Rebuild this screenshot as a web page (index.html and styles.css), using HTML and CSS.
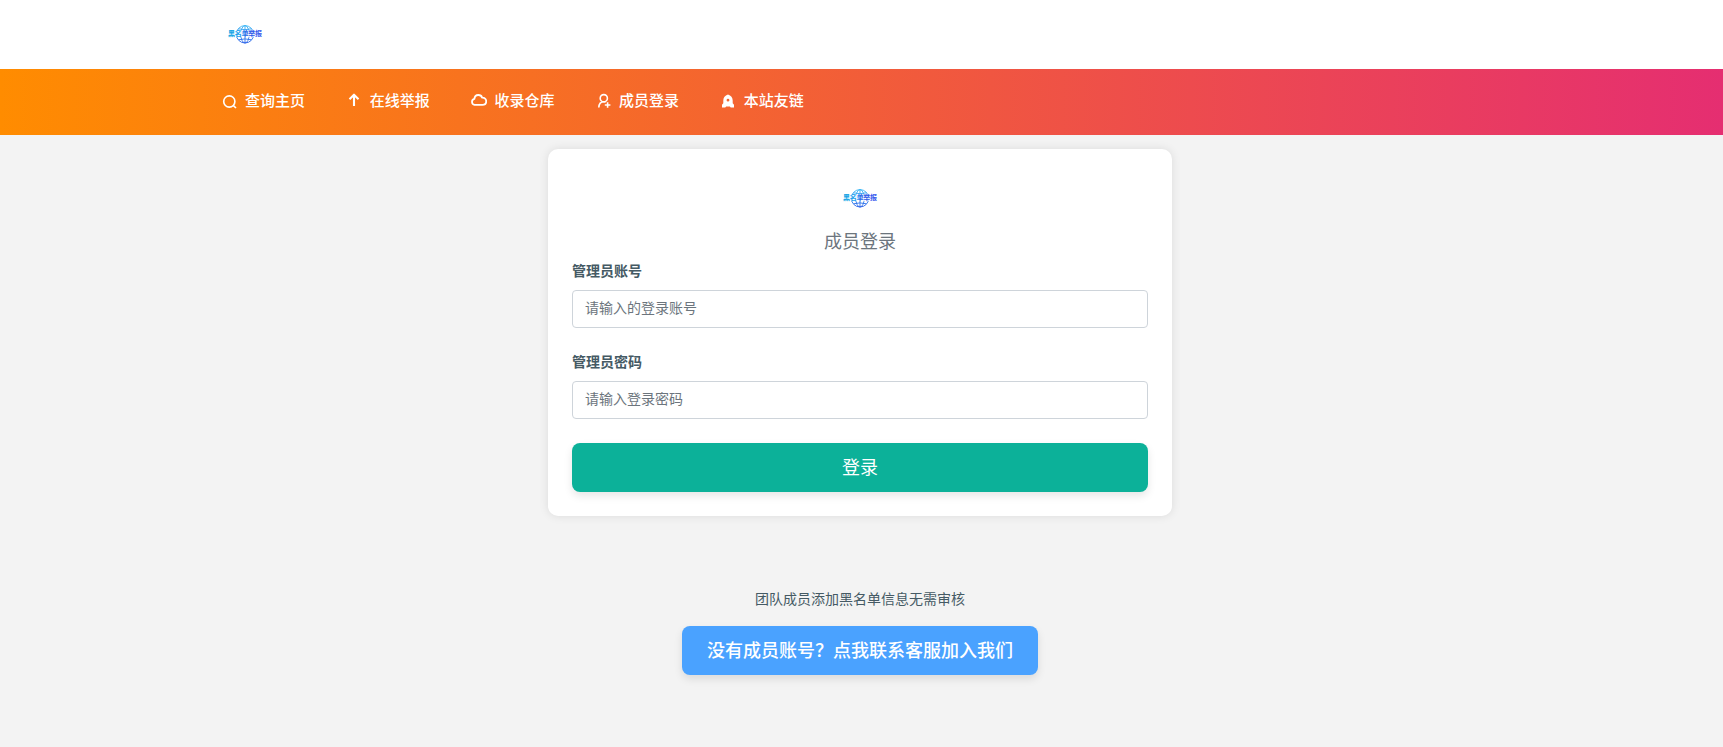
FILE: index.html
```html
<!DOCTYPE html>
<html lang="zh-CN">
<head>
<meta charset="utf-8">
<title>成员登录</title>
<link rel="stylesheet" href="styles.css">
</head>
<body>
<svg class="defs" aria-hidden="true">
  <defs>
    <linearGradient id="brand" gradientUnits="userSpaceOnUse" x1="0" y1="0" x2="36" y2="0">
      <stop offset="0" stop-color="#18a8e0"/><stop offset=".4" stop-color="#209af0"/><stop offset=".55" stop-color="#2456e4"/><stop offset="1" stop-color="#3d5cf0"/>
    </linearGradient>
    <linearGradient id="globe" x1="0" y1="0" x2="0" y2="1">
      <stop offset="0" stop-color="#35b5f5"/><stop offset="1" stop-color="#2860e8"/>
    </linearGradient>
    <symbol id="logo" viewBox="0 0 36 20">
      <g fill="none" stroke="url(#globe)" stroke-width=".9">
        <circle cx="18" cy="10.300" r="8.700"/>
        <ellipse cx="18" cy="10.300" rx="4.200" ry="8.700"/>
        <path d="M18 1.600v17.400M11.500 4.800q6.500 1.800 13 0M11.500 15.800q6.500-1.800 13 0"/>
      </g>
      <path d="M9 6.400h18v6.600H9z" fill="#fff" fill-opacity=".75"/>
      <text x="1" y="12.300" textLength="34" class="logo-text" fill="url(#brand)">黑名单举报</text>
    </symbol>
  </defs>
</svg>
<header class="header">
  <div class="container"><svg class="logo"><use href="#logo"/></svg></div>
</header>
<nav class="nav">
  <div class="container menu">
    <a class="item"><svg class="icon" viewBox="0 0 16 16"><circle cx="7.300" cy="8.500" r="5.600"/><path d="M11.200 12.400l2.800 2.600"/></svg><span>查询主页</span></a>
    <a class="item"><svg class="icon arrow" viewBox="0 0 16 16"><path d="M8 13V2.200M3.500 6.200L8 1.700l4.500 4.500"/></svg><span>在线举报</span></a>
    <a class="item"><svg class="icon cloud" viewBox="0 0 16 16"><path d="M3.600 11.800a3 3 0 0 1-.2-5.900C3.600 3.300 5.200 2 7.300 2c1.900 0 3.300 1 3.900 2.700 2.300-.1 4 1.300 4 3.500s-1.500 3.600-3.600 3.600z"/></svg><span>收录仓库</span></a>
    <a class="item"><svg class="icon" viewBox="0 0 16 16"><circle cx="7.800" cy="5.200" r="3.600"/><path d="M2.800 14.500c.2-3.400 2-5.700 5-5.700.8 0 1.300.1 1.800.3M11.600 9.200v5.600M8.800 12h5.600"/></svg><span>成员登录</span></a>
    <a class="item"><svg class="icon solid" viewBox="0 0 16 16"><path fill-rule="evenodd" d="M8 1.500c3 1 4.700 3 4.700 6v2.800l1.300 1.500v2.700h-3.300l-.8-1.100H6.100l-.8 1.100H2v-2.700l1.300-1.500V7.500c0-3 1.700-5 4.700-6zM8 5.800a1.400 1.400 0 1 0 0 2.800 1.400 1.400 0 0 0 0-2.800z"/></svg><span>本站友链</span></a>
  </div>
</nav>
<main class="main">
  <form class="card">
    <svg class="logo"><use href="#logo"/></svg>
    <h1 class="title">成员登录</h1>
    <label class="label" for="account">管理员账号</label>
    <input class="input" id="account" type="text" placeholder="请输入的登录账号">
    <label class="label" for="password">管理员密码</label>
    <input class="input" id="password" type="password" placeholder="请输入登录密码">
    <button class="button login" type="button">登录</button>
  </form>
  <p class="note">团队成员添加黑名单信息无需审核</p>
  <a class="button join">没有成员账号？点我联系客服加入我们</a>
</main>
</body>
</html>
```
FILE: styles.css
```css
* { box-sizing: border-box; }
body {
  margin: 0;
  min-height: 747px;
  background: #f3f3f3;
  color: #455a64;
  font: 14px/21px "Noto Sans CJK SC", sans-serif;
}
.defs { position: absolute; width: 0; height: 0; }
.container { width: 1320px; margin: 0 auto; padding-left: 20px; }
.header { height: 69px; background: #fff; }
.header .container { display: flex; align-items: center; height: 68px; padding-left: 25px; }
.logo { display: block; width: 36px; height: 20px; }
.logo-text { font: 700 7px "Noto Sans CJK SC", sans-serif; }
.nav { height: 66px; background: linear-gradient(90deg, #ff8c00, #e52e71); }
.menu { display: flex; align-items: center; height: 63px; }
.item {
  display: flex;
  align-items: center;
  gap: 7.5px;
  width: 124.7px;
  color: #fff;
  font-size: 15px;
  font-weight: 500;
  white-space: nowrap;
}
.item span { padding-bottom: 2px; }
.icon { flex: none; width: 16px; height: 16px; fill: none; stroke: #fff; stroke-width: 1.6; stroke-linejoin: round; }
.arrow { stroke-width: 2.1; }
.cloud { stroke-width: 1.8; }
.solid { fill: #fff; stroke: none; }
.main { display: flex; flex-direction: column; align-items: center; padding: 14px 3px 0 0; }
.card {
  display: flex;
  flex-direction: column;
  width: 624px;
  height: 367px;
  padding: 39px 24px 24px;
  border-radius: 10px;
  background: #fff;
  box-shadow: 0 0 10px rgba(0, 0, 0, .1);
}
.card .logo { align-self: center; }
.title { margin: 19px 0 7px; color: #6c757d; font-size: 18px; font-weight: 400; line-height: 26px; text-align: center; }
.label { margin-bottom: 9px; font-weight: 700; }
.input {
  width: 100%;
  height: 38px;
  margin: 0 0 23px;
  padding: 0 12px 4px;
  border: 1px solid #ced4da;
  border-radius: 4px;
  outline: 0;
  background: #fff;
  color: inherit;
  font: inherit;
}
.input::placeholder { color: #6c757d; opacity: 1; }
.button {
  height: 49px;
  padding: 0;
  border: 0;
  border-radius: 8px;
  color: #fff;
  font: 500 18px/46px "Noto Sans CJK SC", sans-serif;
  text-align: center;
  box-shadow: 0 4px 8px rgba(0, 0, 0, .1);
}
.login { margin-top: 1px; padding-bottom: 4px; font-weight: 400; background: #0cb199; }
.note { margin: 72px 0 17px; }
.join { width: 356px; background: #4aa2ff; }
```
